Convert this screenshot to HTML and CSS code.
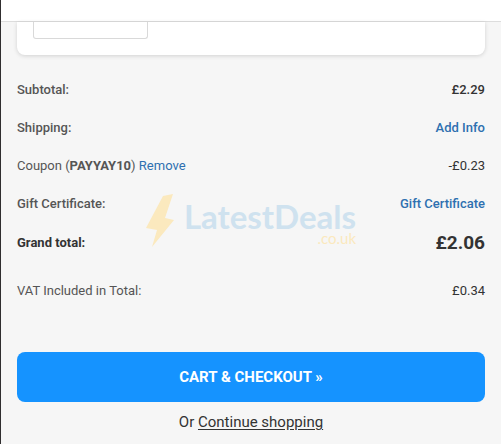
FILE: index.html
```html
<!DOCTYPE html>
<html lang="en">
<head>
<meta charset="utf-8">
<meta name="viewport" content="width=device-width, initial-scale=1">
<title>Cart</title>
<link rel="stylesheet" href="styles.css">
</head>
<body>
<header class="topbar"></header>
<main class="cart">
  <section class="item-card">
    <input class="quantity" type="text" aria-label="Quantity">
  </section>
  <dl class="totals">
    <div class="row"><dt>Subtotal:</dt><dd>£2.29</dd></div>
    <div class="row"><dt>Shipping:</dt><dd><a href="#shipping">Add Info</a></dd></div>
    <div class="row light"><dt>Coupon (<strong>PAYYAY10</strong>) <a href="#remove">Remove</a></dt><dd>-£0.23</dd></div>
    <div class="row"><dt>Gift Certificate:</dt><dd><a href="#gift">Gift Certificate</a></dd></div>
    <div class="row grand"><dt>Grand total:</dt><dd>£2.06</dd></div>
    <div class="row light vat"><dt>VAT Included in Total:</dt><dd>£0.34</dd></div>
  </dl>
  <button class="checkout" type="button">CART &amp; CHECKOUT »</button>
  <p class="continue">Or <a href="#shop">Continue shopping</a></p>
  <div class="watermark">
    <svg class="bolt" viewBox="0 0 28 54" aria-hidden="true"><path d="M17 2 27 0 19 24l9 2L6 53 11 36 0 34Z"/></svg>
    <div class="brand">
      <span class="name">LatestDeals</span>
      <span class="domain">.co.uk</span>
    </div>
  </div>
</main>
</body>
</html>
```
FILE: styles.css
```css
* { box-sizing: border-box; }
body {
  margin: 0;
  min-height: 100vh;
  border-left: 1px solid #302e2f;
  background: #f6f6f6;
  color: #333;
  font: 500 13px/20px Roboto, "Noto Sans", sans-serif;
}
.topbar {
  height: 22px;
  background: #fff;
  border-bottom: 1px solid #ddd;
}
.cart {
  position: relative;
  padding: 0 16px;
}
.item-card {
  padding: 0 16px 16px;
  background: #fff;
  border-radius: 0 0 8px 8px;
  box-shadow: 0 1px 4px rgba(0, 0, 0, .15);
}
.quantity {
  display: block;
  width: 115px;
  height: 17px;
  border: 1px solid #d9d9d9;
  border-top: 0;
  border-radius: 0 0 3px 3px;
  background: #fff;
}
.totals { margin: 16px 0 33px; }
.row {
  display: flex;
  justify-content: space-between;
  align-items: center;
  height: 38px;
}
dt { color: #555; }
dd { margin: 0; }
a { color: #2e70b0; text-decoration: none; }
.light { font-weight: 400; }
.grand { height: 40px; font-weight: 700; }
.grand dt { color: #333; }
.grand dd { font-size: 19px; }
.vat { height: 56px; }
.checkout {
  display: block;
  width: 100%;
  height: 50px;
  border: 0;
  border-radius: 8px;
  background: #1593ff;
  color: #fff;
  font: 700 15px/20px Roboto, "Noto Sans", sans-serif;
}
.continue {
  margin: 10px 0 0;
  text-align: center;
  font-size: 15px;
  font-weight: 400;
}
.continue a {
  color: inherit;
  text-decoration: underline;
  text-underline-offset: 2px;
}
.watermark {
  position: absolute;
  top: 172px;
  left: 0;
  right: 0;
  display: flex;
  justify-content: center;
  gap: 10px;
  pointer-events: none;
}
.bolt { width: 28px; height: 54px; fill: #fbe9be; }
.brand {
  display: flex;
  flex-direction: column;
  align-items: flex-end;
  padding-top: 8px;
  color: #cfe2ef;
  font: 700 33px/28px Lato, sans-serif;
}
.domain {
  color: #fbe9be;
  font-size: 15px;
  font-weight: 400;
  line-height: 16px;
}
```
